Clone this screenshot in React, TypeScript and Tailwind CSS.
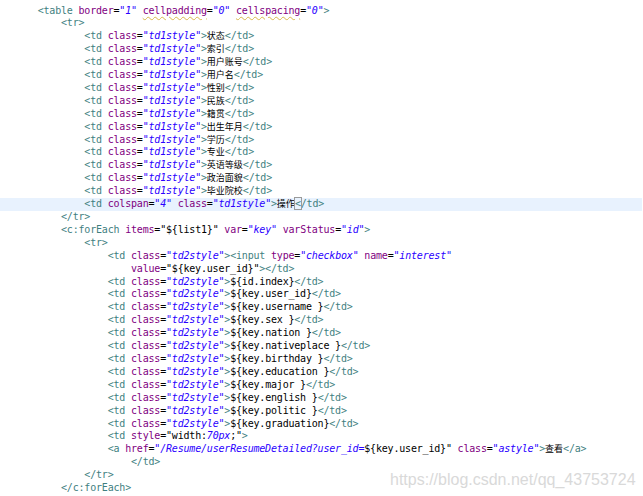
import React from 'react';

// token kinds: t = tag, a = attribute, v = string value, p = plain, c = chinese text, w = warned attribute, k = bracket match
type Kind = 't' | 'a' | 'v' | 'p' | 'c' | 'w' | 'k';
type Seg = [Kind, string];

const KIND_CLASS: Record<Kind, string> = {
  t: 'text-[#3f7f7f]',
  a: 'text-[#7f007f]',
  v: 'text-[#2a00ff] italic',
  p: 'text-black',
  c: "text-black font-['Noto_Sans_CJK_SC',sans-serif] text-[9px] tracking-normal",
  w: 'text-[#7f007f] underline decoration-wavy decoration-[#d8b94a] decoration-1 underline-offset-2',
  k: 'text-[#3f7f7f] outline outline-1 outline-[#9a9a9a]',
};

const pad = (n: number): Seg => ['p', ' '.repeat(n)];

const td1 = (label: string): Seg[] => [
  pad(8),
  ['t', '<td'],
  ['p', ' '],
  ['a', 'class'],
  ['p', '='],
  ['v', '"td1style"'],
  ['t', '>'],
  ['c', label],
  ['t', '</td>'],
];

const td2 = (expr: string): Seg[] => [
  pad(12),
  ['t', '<td'],
  ['p', ' '],
  ['a', 'class'],
  ['p', '='],
  ['v', '"td2style"'],
  ['t', '>'],
  ['p', expr],
  ['t', '</td>'],
];

const LINES: Seg[][] = [
  [
    ['t', '<table'],
    ['p', ' '],
    ['a', 'border'],
    ['p', '='],
    ['v', '"1"'],
    ['p', ' '],
    ['w', 'cellpadding'],
    ['p', '='],
    ['v', '"0"'],
    ['p', ' '],
    ['w', 'cellspacing'],
    ['p', '='],
    ['v', '"0"'],
    ['t', '>'],
  ],
  [pad(4), ['t', '<tr>']],
  ...['状态', '索引', '用户账号', '用户名', '性别', '民族', '籍贯', '出生年月', '学历', '专业', '英语等级', '政治面貌', '毕业院校'].map(td1),
  [
    pad(8),
    ['t', '<td'],
    ['p', ' '],
    ['a', 'colspan'],
    ['p', '='],
    ['v', '"4"'],
    ['p', ' '],
    ['a', 'class'],
    ['p', '='],
    ['v', '"td1style"'],
    ['t', '>'],
    ['c', '操作'],
    ['k', '<'],
    ['t', '/td>'],
  ],
  [pad(4), ['t', '</tr>']],
  [
    pad(4),
    ['t', '<c:forEach'],
    ['p', ' '],
    ['a', 'items'],
    ['p', '="${list1}"'],
    ['p', ' '],
    ['a', 'var'],
    ['p', '='],
    ['v', '"key"'],
    ['p', ' '],
    ['a', 'varStatus'],
    ['p', '='],
    ['v', '"id"'],
    ['t', '>'],
  ],
  [pad(8), ['t', '<tr>']],
  [
    pad(12),
    ['t', '<td'],
    ['p', ' '],
    ['a', 'class'],
    ['p', '='],
    ['v', '"td2style"'],
    ['t', '><input'],
    ['p', ' '],
    ['a', 'type'],
    ['p', '='],
    ['v', '"checkbox"'],
    ['p', ' '],
    ['a', 'name'],
    ['p', '='],
    ['v', '"interest"'],
  ],
  [pad(16), ['a', 'value'], ['p', '="${key.user_id}"'], ['t', '></td>']],
  td2('${id.index}'),
  td2('${key.user_id}'),
  td2('${key.username }'),
  td2('${key.sex }'),
  td2('${key.nation }'),
  td2('${key.nativeplace }'),
  td2('${key.birthday }'),
  td2('${key.education }'),
  td2('${key.major }'),
  td2('${key.english }'),
  td2('${key.politic }'),
  td2('${key.graduation}'),
  [
    pad(12),
    ['t', '<td'],
    ['p', ' '],
    ['a', 'style'],
    ['p', '="width:'],
    ['v', '70px'],
    ['p', ';"'],
    ['t', '>'],
  ],
  [
    pad(12),
    ['t', '<a'],
    ['p', ' '],
    ['a', 'href'],
    ['p', '='],
    ['v', '"/Resume/userResumeDetailed?user_id='],
    ['p', '${key.user_id}"'],
    ['p', ' '],
    ['a', 'class'],
    ['p', '='],
    ['v', '"astyle"'],
    ['t', '>'],
    ['c', '查看'],
    ['t', '</a>'],
  ],
  [pad(16), ['t', '</td>']],
  [pad(8), ['t', '</tr>']],
  [pad(4), ['t', '</c:forEach>']],
];

const HIGHLIGHT = 15;

export default function App() {
  return (
    <div className="relative w-[643px] h-[496px] overflow-hidden bg-white">
      <div className="pt-[4.5px] font-['DejaVu_Sans_Mono',monospace] text-[10px] tracking-[-0.19px]">
        {LINES.map((line, i) => (
          <div
            key={i}
            className={`h-[12.92px] leading-[12.92px] whitespace-pre pl-[37.7px] w-[642px] ${i === HIGHLIGHT ? 'bg-[#e8f2fe]' : ''}`}
          >
            {line.map(([kind, text], j) => (
              <span key={j} className={KIND_CLASS[kind]}>
                {text}
              </span>
            ))}
          </div>
        ))}
      </div>

      {/* blog watermark over the code */}
      <div className="absolute left-[390px] top-[468px] font-['Liberation_Sans',Arial,sans-serif] text-[16px] text-[#d9d9d9] whitespace-nowrap">
        https://blog.csdn.net/qq_43753724
      </div>
    </div>
  );
}
